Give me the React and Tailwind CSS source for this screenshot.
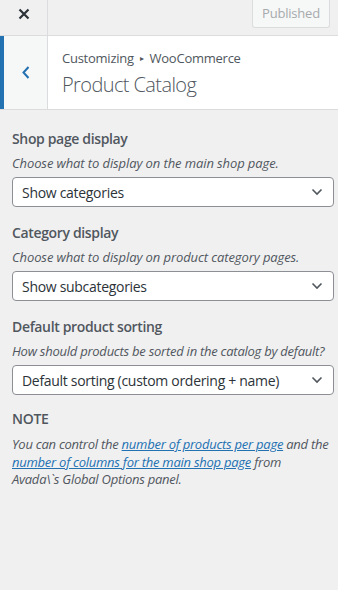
import React from "react";

const font = { fontFamily: '"Open Sans", "Noto Sans", sans-serif' };

function Chevron() {
  return (
    <svg width="12" height="8" viewBox="0 0 12 8" className="shrink-0">
      <path d="M1.5 1.5 L6 6 L10.5 1.5" fill="none" stroke="#50575e" strokeWidth="1.6" />
    </svg>
  );
}

function Select({ value }) {
  return (
    <div className="mt-[5px] flex h-[30px] items-center justify-between rounded-[4px] border border-[#8c8f94] bg-white pl-[9px] pr-[10px] text-[14px] tracking-[-0.3px] text-[#2c3338]">
      <span className="whitespace-nowrap">{value}</span>
      <Chevron />
    </div>
  );
}

function Control({ label, desc, value, tight }) {
  return (
    <div className="flex flex-col">
      <div className="h-[20px] whitespace-nowrap text-[14px] font-semibold leading-[20px] tracking-[-0.35px] text-[#50575e]">{label}</div>
      <div
        className={
          tight
            ? "mt-[5px] h-[18px] whitespace-nowrap text-[13px] italic leading-[18px] tracking-[-0.25px] text-[#50575e]"
            : "mt-[5px] h-[18px] whitespace-nowrap text-[13px] italic leading-[18px] tracking-[-0.1px] text-[#50575e]"
        }
      >
        {desc}
      </div>
      <Select value={value} />
    </div>
  );
}

export default function App() {
  return (
    <div className="flex min-h-[590px] w-[338px] flex-col bg-[#f0f0f1]" style={font}>
      <div className="flex h-[36px] items-start border-b border-[#dcdcde] bg-[#f0f0f1]">
        <div className="flex h-[35px] w-[48px] items-center justify-center border-r border-[#dcdcde]">
          <svg width="12" height="12" viewBox="0 0 12 12" className="-mt-[8px]">
            <path d="M1.5 1.5 L10.5 10.5 M10.5 1.5 L1.5 10.5" stroke="#2c3338" strokeWidth="2.2" />
          </svg>
        </div>
        <div className="flex flex-1 justify-end pr-[8px]">
          <div className="flex h-[28px] w-[78px] items-center justify-center rounded-b-[3px] border border-t-0 border-[#dcdcde] bg-[#f6f7f7] text-[13px] tracking-[-0.2px] text-[#a7aaad]">
            Published
          </div>
        </div>
      </div>
      <div className="flex h-[74px] border-b border-[#dcdcde] bg-white">
        <div className="w-[4px] bg-[#2271b1]" />
        <div className="flex w-[44px] items-center justify-center border-r border-[#dcdcde] bg-[#f6f7f7]">
          <svg width="8" height="13" viewBox="0 0 8 13">
            <path d="M6.5 1 L1.5 6.5 L6.5 12" fill="none" stroke="#2271b1" strokeWidth="2" />
          </svg>
        </div>
        <div className="flex flex-col pl-[14px] pt-[12px]">
          <div className="flex items-center whitespace-nowrap text-[13px] leading-[20px] tracking-[-0.25px] text-[#50575e]">
            <span>Customizing</span>
            <span className="mx-[6px] text-[8px]">▸</span>
            <span>WooCommerce</span>
          </div>
          <div className="mt-[3px] whitespace-nowrap text-[20px] font-light leading-[28px] tracking-[-0.6px] text-[#50575e]">Product Catalog</div>
        </div>
      </div>
      <div className="flex flex-col gap-[16px] pl-[12px] pr-[4px] pt-[19px]">
        <Control label="Shop page display" desc="Choose what to display on the main shop page." value="Show categories" />
        <Control label="Category display" desc="Choose what to display on product category pages." value="Show subcategories" />
        <Control tight label="Default product sorting" desc="How should products be sorted in the catalog by default?" value="Default sorting (custom ordering + name)" />
        <div className="flex flex-col">
          <div className="-mt-[2px] h-[20px] text-[14px] font-semibold leading-[20px] tracking-[-0.3px] text-[#50575e]">NOTE</div>
          <p className="mt-[7px] whitespace-nowrap text-[13px] italic leading-[17.5px] tracking-[-0.25px] text-[#50575e]">
            You can control the <span className="text-[#2271b1] underline">number of products per page</span> and the
            <br />
            <span className="text-[#2271b1] underline">number of columns for the main shop page</span> from
            <br />
            Avada\`s Global Options panel.
          </p>
        </div>
      </div>
    </div>
  );
}
